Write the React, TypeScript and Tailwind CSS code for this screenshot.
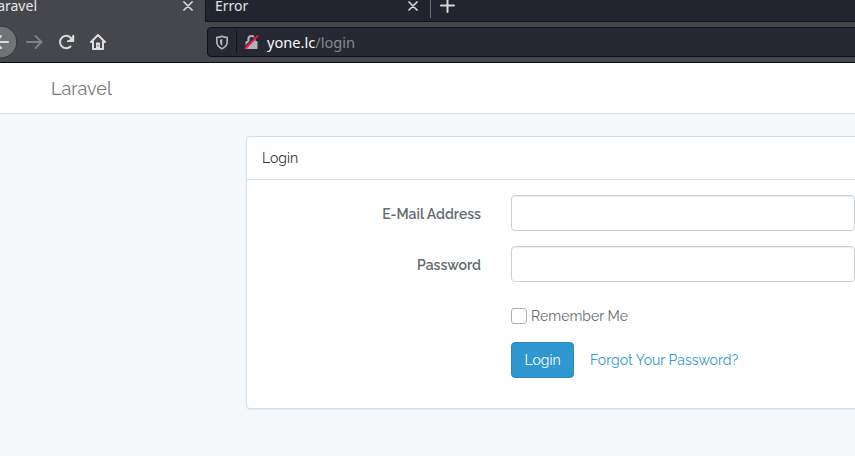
import React from "react";

const CloseIcon = () => (
  <svg width="10" height="10" viewBox="0 0 10 10" fill="none" stroke="#d7d8d6" strokeWidth="1.7" strokeLinecap="round">
    <path d="M1 1l8 8M9 1L1 9" />
  </svg>
);

function TabStrip() {
  return (
    <div className="flex h-[22px] shrink-0">
      <div className="relative w-[205px] shrink-0 overflow-hidden">
        <span className="absolute right-[168px] top-0 text-[14px] leading-[12px] text-[#e8e8e6] whitespace-nowrap">Laravel</span>
        <span className="absolute left-[183px] top-[1px]"><CloseIcon /></span>
      </div>
      <div className="relative flex-1 border-b border-l border-[#14151b] bg-[#23252e]">
        <span className="absolute left-[9px] top-0 text-[14px] leading-[12px] text-[#e4e4e2]">Error</span>
        <span className="absolute left-[202px] top-[1px]"><CloseIcon /></span>
        <span className="absolute left-[224px] top-0 h-[18px] w-px bg-[#6c6d73]" />
        <svg className="absolute left-[234px] top-[-2px]" width="15" height="15" viewBox="0 0 15 15" fill="none" stroke="#d7d8d6" strokeWidth="2" strokeLinecap="round">
          <path d="M7.5 1v13M1 7.5h13" />
        </svg>
      </div>
    </div>
  );
}

function Toolbar() {
  return (
    <div className="flex h-[41px] shrink-0 border-b border-[#0c0c0d] pt-[3px]">
      <div className="flex w-[207px] shrink-0">
        <svg width="207" height="34" viewBox="0 25 207 34" fill="none" strokeLinecap="round" strokeLinejoin="round">
          <circle cx="1" cy="42" r="16" fill="#727377" stroke="#323338" />
          <path d="M-5 42H8M1 36l-6 6 6 6" stroke="#dcdcda" strokeWidth="2" />
          <path d="M27 42h14M35.5 36l6 6-6 6" stroke="#808185" strokeWidth="1.9" />
          <path d="M71.2 38.3A6.2 6.2 0 1 0 70.5 46.5" stroke="#dcdcda" strokeWidth="2" />
          <path d="M73.3 35.7v5.5h-5.5" stroke="#dcdcda" strokeWidth="1.8" />
          <path d="M68 41.2l5.3-5.5v5.5z" fill="#dcdcda" />
          <path d="M91 42l7-7 7 7M93 41v8h10v-8" stroke="#dcdcda" strokeWidth="2" />
          <path d="M96 48v-5.5h4V48z" fill="#dcdcda" />
          <path d="M98 45.5v.2" stroke="#46484e" strokeWidth="1.2" />
        </svg>
      </div>
      <div className="mt-[2px] flex h-[30px] w-[700px] shrink-0 items-center rounded-[4px] border border-[#101117] bg-[#262833]">
        <svg className="ml-[7px] shrink-0" width="14" height="15" viewBox="0 0 14 15" fill="none">
          <path d="M7 1.2C5.5 2 3.5 2.3 1.8 2.3V6.6C1.8 10 4 12.5 7 13.8c3-1.3 5.2-3.8 5.2-7.2V2.3C10.5 2.3 8.5 2 7 1.2z" stroke="#b1b2b4" strokeWidth="1.7" strokeLinejoin="round" />
          <path d="M7.3 4c-.8.4-1.5.5-2.4.6V7c0 1.7.9 3 2.4 4z" fill="#b1b2b4" />
        </svg>
        <span className="ml-[7px] h-[22px] w-px bg-[#101117]" />
        <svg className="ml-[7px] shrink-0" width="15" height="16" viewBox="0 0 15 16" fill="none">
          <path d="M4.5 8V5a3 3 0 0 1 6 0V8" stroke="#b1b2b4" strokeWidth="2.2" />
          <rect x="1.5" y="7" width="12" height="8" rx="1" fill="#b1b2b4" />
          <path d="M-.2 13.8L13 .6" stroke="#262833" strokeWidth="1.2" />
          <path d="M.8 15L14.2 1.4" stroke="#f0144a" strokeWidth="1.9" />
        </svg>
        <span className="ml-[8px] whitespace-nowrap text-[14.6px] leading-[22px] text-[#fafaf8]">yone.lc<span className="text-[#87888e]">/login</span></span>
      </div>
    </div>
  );
}

function LoginPanel() {
  return (
    <div className="ml-[246px] mt-[22px] h-[273px] w-[750px] rounded-[4px] border border-[#d3e0e9] bg-white shadow-[0_1px_1px_rgba(0,0,0,0.05)]">
      <div className="h-[43px] border-b border-[#d3e0e9] pl-[15px] pt-[10px] text-[14px] leading-[22px] text-[#333333]">Login</div>
      <div className="flex flex-col pt-[15px]">
        <label className="flex">
          <span className="w-[234px] pt-[8px] text-right text-[14px] font-semibold leading-[22px] text-[#636b6f]">E-Mail Address</span>
          <input className="ml-[30px] h-[36px] w-[344px] rounded-[4px] border border-[#ccd0d2] bg-white shadow-[inset_0_1px_1px_rgba(0,0,0,0.075)]" />
        </label>
        <label className="mt-[15px] flex">
          <span className="w-[234px] pt-[8px] text-right text-[14px] font-semibold leading-[22px] text-[#636b6f]">Password</span>
          <input type="password" className="ml-[30px] h-[36px] w-[344px] rounded-[4px] border border-[#ccd0d2] bg-white shadow-[inset_0_1px_1px_rgba(0,0,0,0.075)]" />
        </label>
        <label className="ml-[264px] mt-[23px] flex h-[22px] items-center">
          <span className="h-[16px] w-[16px] rounded-[3px] border border-[#b6afa9] bg-white" />
          <span className="ml-[4px] whitespace-nowrap text-[14px] leading-[22px] tracking-[0.05px] text-[#636b6f]">Remember Me</span>
        </label>
        <div className="ml-[264px] mt-[15px] flex items-center">
          <button className="flex h-[36px] w-[63px] items-center justify-center rounded-[4px] border border-[#2a88bd] bg-[#3097d1] text-[14px] leading-[22px] text-white">Login</button>
          <a className="ml-[16px] whitespace-nowrap text-[14px] leading-[22px] tracking-[0.04px] text-[#3097d1]">Forgot Your Password?</a>
        </div>
      </div>
    </div>
  );
}

export default function App() {
  return (
    <div className="flex h-[456px] w-[855px] flex-col overflow-hidden bg-[#f5f8fa]">
      <header className="h-[63px] shrink-0 overflow-hidden bg-[#45474d] font-['Noto_Sans',sans-serif]">
        <TabStrip />
        <Toolbar />
      </header>
      <main className="font-['Raleway','Lato',sans-serif]">
        <nav className="h-[51px] border-b border-[#d3e0e9] bg-white pl-[51px] pt-[15px] text-[18px] leading-[22px] text-[#777777]">Laravel</nav>
        <LoginPanel />
      </main>
    </div>
  );
}
